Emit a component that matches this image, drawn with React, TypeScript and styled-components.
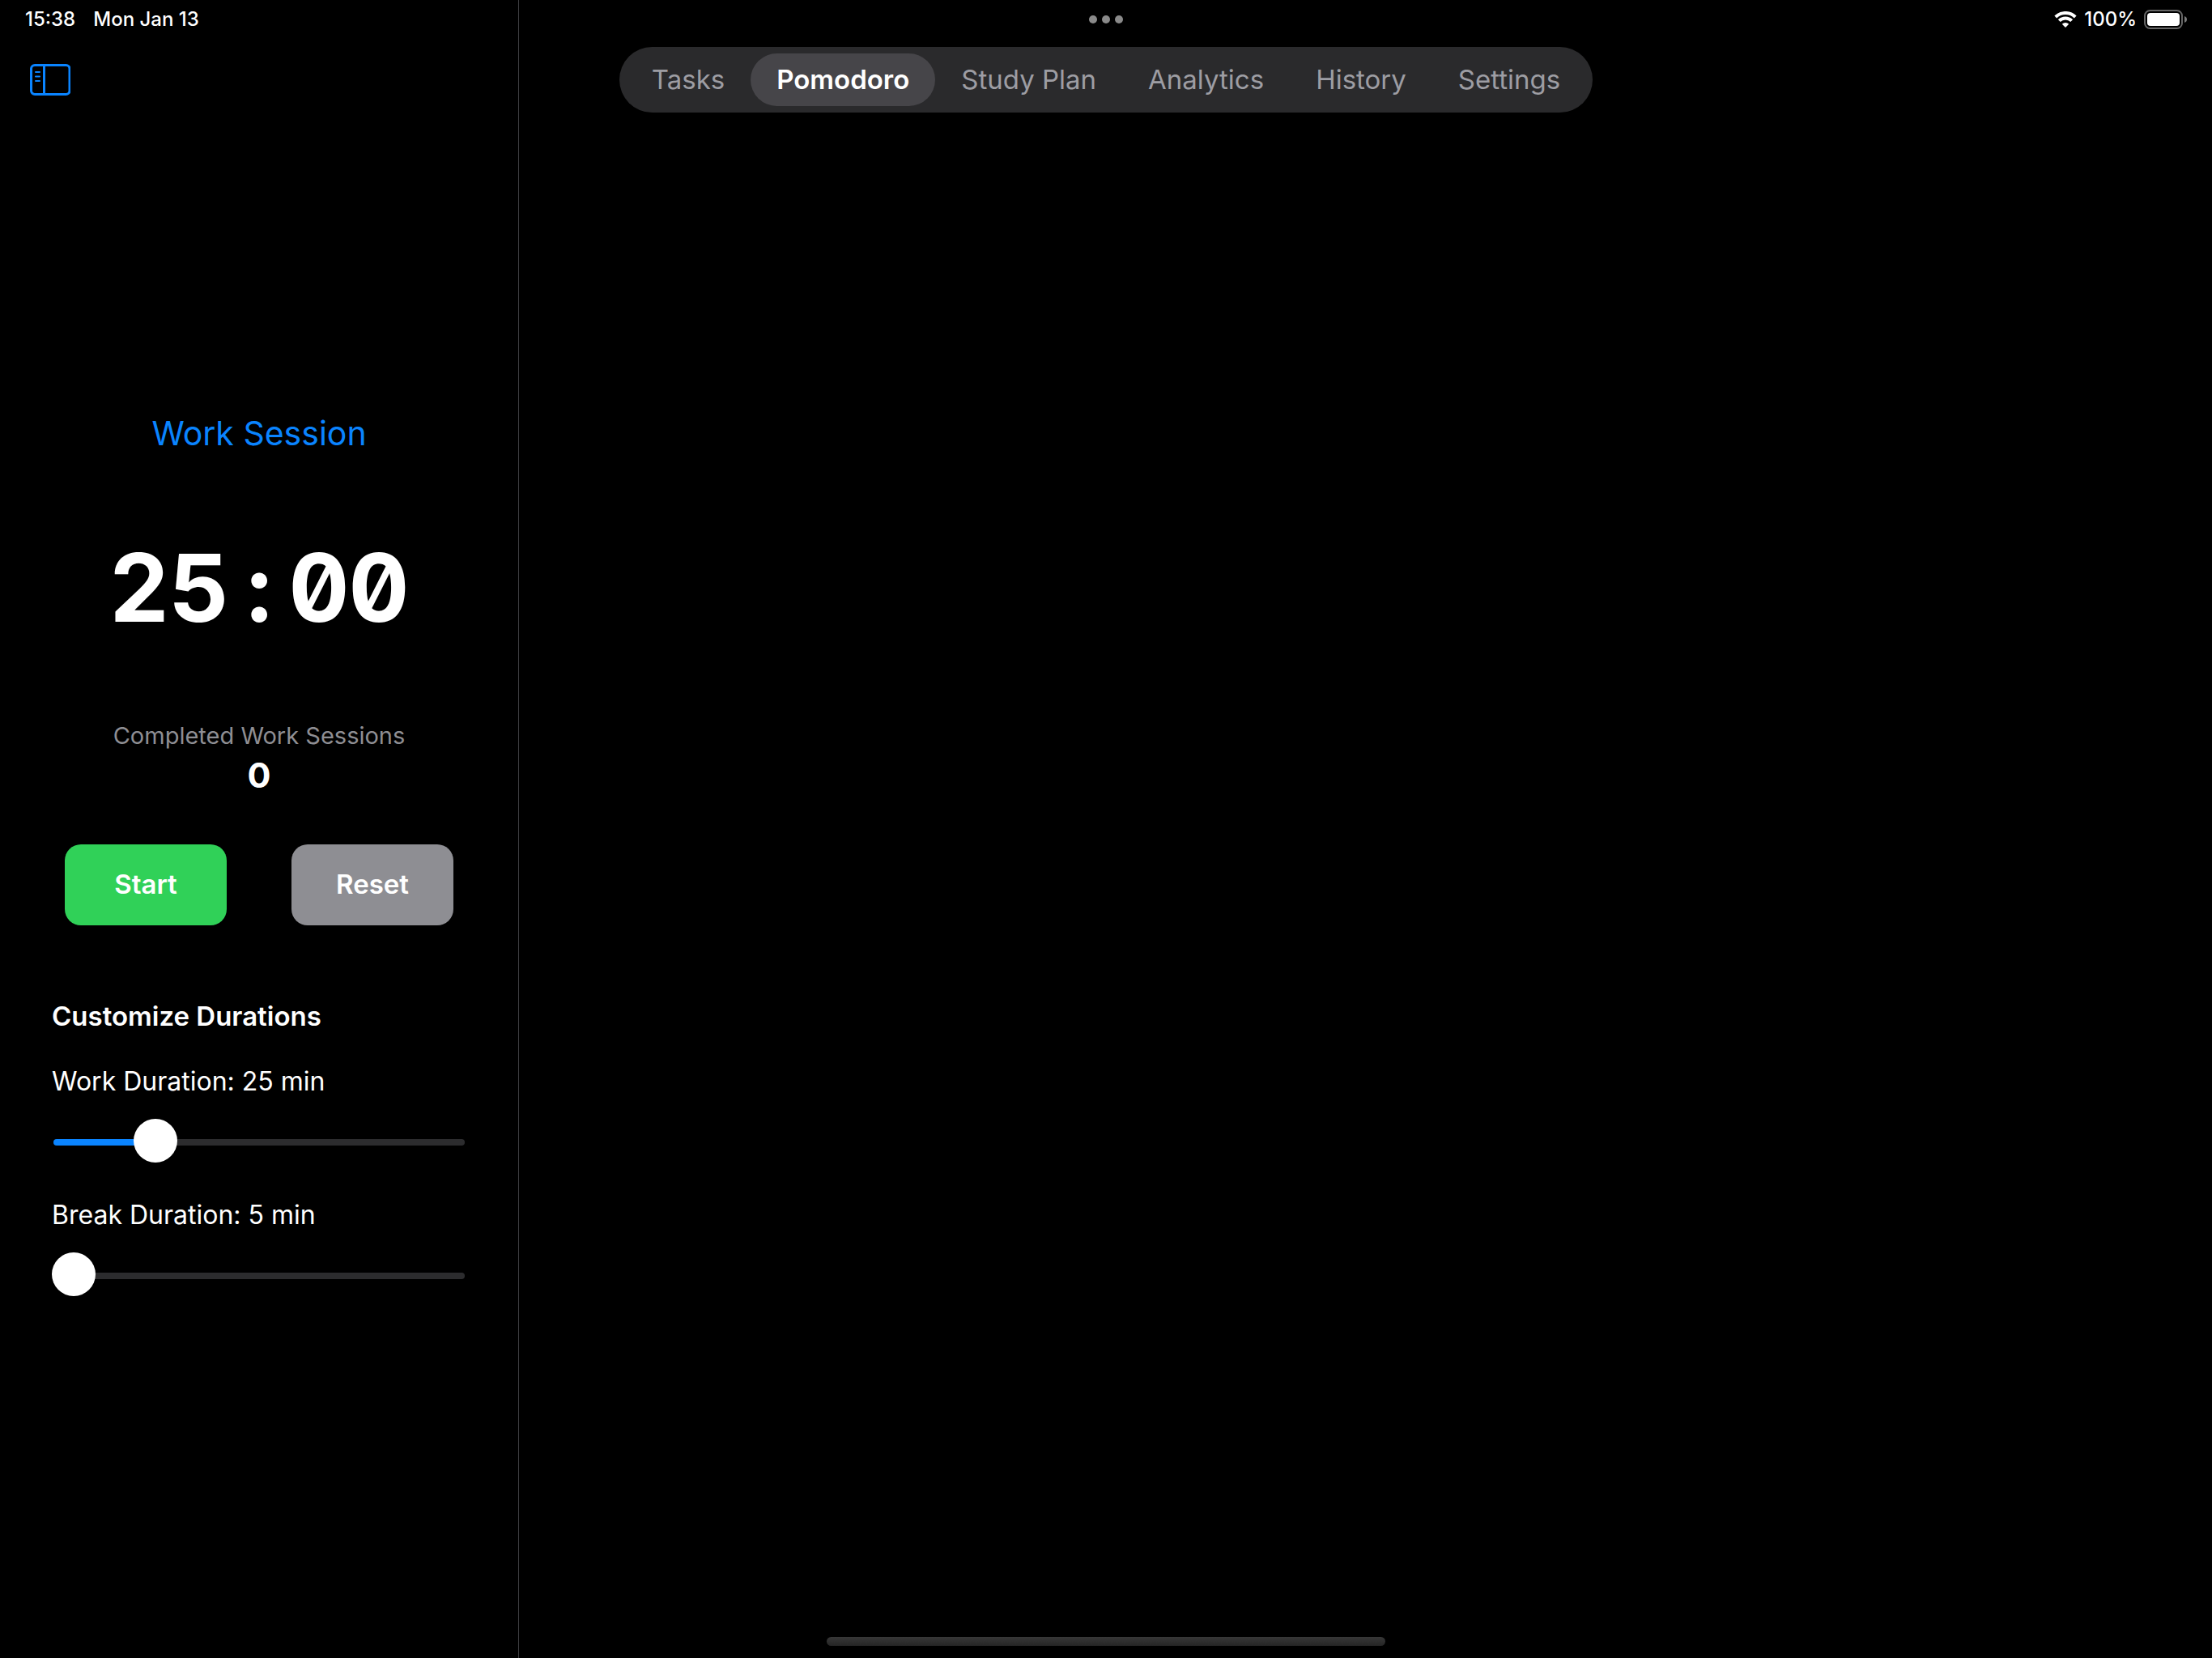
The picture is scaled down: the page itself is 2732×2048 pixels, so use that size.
import React, { useState } from "react";
import styled, { createGlobalStyle } from "styled-components";

const GlobalStyle = createGlobalStyle`
  *, *::before, *::after { box-sizing: border-box; }
  body {
    margin: 0;
    background: #000;
    color: #fff;
    font-family: Inter, "Liberation Sans", sans-serif;
  }
  button, input { font: inherit; color: inherit; }
`;

const Page = styled.div`
  display: grid;
  grid-template-columns: 641px minmax(0, 1fr);
  grid-template-rows: auto 1fr auto;
  min-height: 100vh;
`;

const Header = styled.header`
  grid-area: 1 / 1 / 2 / 3;
  z-index: 1;
`;

const StatusBar = styled.div`
  display: grid;
  grid-template-columns: 1fr auto 1fr;
  align-items: center;
  height: 48px;
  padding: 0 31px;
  font-size: 24px;
  font-weight: 500;
  line-height: 28px;
`;

const StatusGroup = styled.div<{ $end?: boolean; $gap: number }>`
  display: flex;
  align-items: center;
  justify-content: ${(p) => (p.$end ? "flex-end" : "flex-start")};
  gap: ${(p) => p.$gap}px;
`;

const Multitask = styled.button`
  display: flex;
  gap: 6px;
  padding: 0;
  border: 0;
  background: none;
`;

const Dot = styled.span`
  width: 10px;
  height: 10px;
  border-radius: 50%;
  background: #8a8a8a;
`;

const TopBar = styled.div`
  display: grid;
  grid-template-columns: 1fr auto 1fr;
  align-items: center;
  padding: 10px 35px 0;
`;

const IconButton = styled.button`
  display: flex;
  justify-self: start;
  padding: 0;
  border: 0;
  background: none;
  color: #0a84ff;
`;

const Tabs = styled.nav`
  display: flex;
  padding: 8px;
  border-radius: 41px;
  background: #2a2a2c;
`;

const Tab = styled.button<{ $active: boolean }>`
  padding: 12px 32px;
  border: 0;
  border-radius: 33px;
  background: ${(p) => (p.$active ? "#464549" : "transparent")};
  color: ${(p) => (p.$active ? "#fff" : "#9d9da3")};
  font-size: 33px;
  font-weight: ${(p) => (p.$active ? 600 : 400)};
  line-height: 41px;
  white-space: nowrap;
`;

const Sidebar = styled.aside`
  grid-area: 1 / 1 / 4 / 2;
  display: flex;
  flex-direction: column;
  justify-content: center;
  padding: 140px 64px 77px;
  border-right: 1px solid #3f3f42;
`;

const SessionTitle = styled.h1`
  margin: 0 0 95px;
  color: #0a84ff;
  font-size: 41px;
  font-weight: 400;
  line-height: 52px;
  text-align: center;
`;

const Timer = styled.time`
  display: grid;
  grid-auto-flow: column;
  grid-auto-columns: 74px;
  justify-content: center;
  margin-bottom: 95px;
  font-size: 116px;
  font-weight: 700;
  font-variant-numeric: tabular-nums slashed-zero;
  line-height: 140px;
`;

const TimerCell = styled.span`
  display: flex;
  justify-content: center;
`;

const Completed = styled.div`
  display: flex;
  flex-direction: column;
  align-items: center;
  gap: 4px;
  margin-bottom: 60px;
`;

const CompletedLabel = styled.span`
  color: #8e8e93;
  font-size: 29px;
  line-height: 36px;
`;

const CompletedCount = styled.strong`
  font-size: 43px;
  font-weight: 700;
  line-height: 52px;
`;

const Actions = styled.div`
  display: flex;
  justify-content: center;
  gap: 80px;
  margin-bottom: 92px;
`;

const ActionButton = styled.button<{ $color: string }>`
  width: 200px;
  height: 100px;
  padding: 0 0 2px;
  border: 0;
  border-radius: 20px;
  background: ${(p) => p.$color};
  font-size: 33px;
  font-weight: 600;
  line-height: 40px;
`;

const SectionTitle = styled.h2`
  margin: 0 0 41px;
  font-size: 33px;
  font-weight: 600;
  line-height: 40px;
`;

const Durations = styled.div`
  display: flex;
  flex-direction: column;
  gap: 43px;
`;

const Duration = styled.div`
  display: flex;
  flex-direction: column;
  gap: 28px;
`;

const DurationLabel = styled.label`
  font-size: 32px;
  line-height: 40px;
`;

const Range = styled.input`
  appearance: none;
  width: calc(100% - 4px);
  height: 54px;
  margin: 0 2px;
  background: none;

  &::-webkit-slider-runnable-track {
    height: 8px;
    border-radius: 4px;
    background: linear-gradient(
      to right,
      #0a84ff var(--fill),
      #2c2c2e var(--fill)
    );
  }

  &::-webkit-slider-thumb {
    appearance: none;
    width: 54px;
    height: 54px;
    margin: -25px -2px 0;
    border-radius: 50%;
    background: #fff;
  }
`;

const HomeArea = styled.footer`
  grid-area: 3 / 1 / 4 / 3;
  z-index: 1;
  display: flex;
  justify-content: center;
  padding-bottom: 15px;
`;

const HomeIndicator = styled.div`
  width: 690px;
  height: 11px;
  border-radius: 6px;
  background: linear-gradient(#373737, #262626);
`;

const SidebarIcon = () => (
  <svg width="52" height="40" viewBox="0 0 52 40" fill="none" stroke="currentColor" aria-hidden="true">
    <rect x="3.5" y="1.5" width="47.5" height="36" rx="4.5" strokeWidth="3" />
    <path d="M19.500 1.5v36" strokeWidth="3" />
    <path d="M9 10h5M9 15.500h5M9 21h5" strokeWidth="2" strokeLinecap="round" />
  </svg>
);

const WifiIcon = () => (
  <svg width="28" height="20" viewBox="0 0 28 20" fill="none" stroke="#fff" aria-hidden="true">
    <path d="M1.800 7a17.300 17.300 0 0 1 24.400 0" strokeWidth="4" />
    <path d="M6.300 11.600a10.900 10.900 0 0 1 15.400 0" strokeWidth="4" />
    <path d="M14 20l-4.200-4.200a6 6 0 0 1 8.400 0z" fill="#fff" stroke="none" />
  </svg>
);

const BatteryIcon = () => (
  <svg width="53" height="24" viewBox="0 0 53 24" fill="none" aria-hidden="true">
    <rect x="1" y="1" width="46" height="22" rx="6.5" stroke="#666" strokeWidth="2" />
    <rect x="4" y="4" width="40" height="16" rx="4" fill="#fff" />
    <path d="M50 8c4 1.200 4 6.800 0 8z" fill="#7a7a7a" />
  </svg>
);

const tabs = ["Tasks", "Pomodoro", "Study Plan", "Analytics", "History", "Settings"];

type SliderProps = {
  id: string;
  name: string;
  value: number;
  min: number;
  max: number;
  step: number;
  onChange: (value: number) => void;
};

function DurationSlider({ id, name, value, min, max, step, onChange }: SliderProps) {
  const fill = `${((value - min) / (max - min)) * 100}%`;
  return (
    <Duration>
      <DurationLabel htmlFor={id}>{`${name}: ${value} min`}</DurationLabel>
      <Range
        id={id}
        type="range"
        min={min}
        max={max}
        step={step}
        value={value}
        onChange={(e) => onChange(Number(e.target.value))}
        style={{ "--fill": fill } as React.CSSProperties}
      />
    </Duration>
  );
}

export default function App() {
  const [active, setActive] = useState("Pomodoro");
  const [work, setWork] = useState(25);
  const [rest, setRest] = useState(5);

  return (
    <>
      <GlobalStyle />
      <Page>
        <Header>
          <StatusBar>
            <StatusGroup $gap={22}>
              <span>15:38</span>
              <span>Mon Jan 13</span>
            </StatusGroup>
            <Multitask aria-label="Multitasking">
              <Dot />
              <Dot />
              <Dot />
            </Multitask>
            <StatusGroup $end $gap={9}>
              <WifiIcon />
              <span>100%</span>
              <BatteryIcon />
            </StatusGroup>
          </StatusBar>
          <TopBar>
            <IconButton aria-label="Toggle sidebar">
              <SidebarIcon />
            </IconButton>
            <Tabs>
              {tabs.map((tab) => (
                <Tab key={tab} $active={tab === active} onClick={() => setActive(tab)}>
                  {tab}
                </Tab>
              ))}
            </Tabs>
          </TopBar>
        </Header>
        <Sidebar>
          <SessionTitle>Work Session</SessionTitle>
          <Timer>
            {`${work}:00`.split("").map((char, i) => (
              <TimerCell key={i}>{char}</TimerCell>
            ))}
          </Timer>
          <Completed>
            <CompletedLabel>Completed Work Sessions</CompletedLabel>
            <CompletedCount>0</CompletedCount>
          </Completed>
          <Actions>
            <ActionButton $color="#30d158">Start</ActionButton>
            <ActionButton $color="#8e8e93">Reset</ActionButton>
          </Actions>
          <SectionTitle>Customize Durations</SectionTitle>
          <Durations>
            <DurationSlider id="work" name="Work Duration" value={work} min={15} max={60} step={5} onChange={setWork} />
            <DurationSlider id="break" name="Break Duration" value={rest} min={5} max={30} step={5} onChange={setRest} />
          </Durations>
        </Sidebar>
        <HomeArea>
          <HomeIndicator />
        </HomeArea>
      </Page>
    </>
  );
}
